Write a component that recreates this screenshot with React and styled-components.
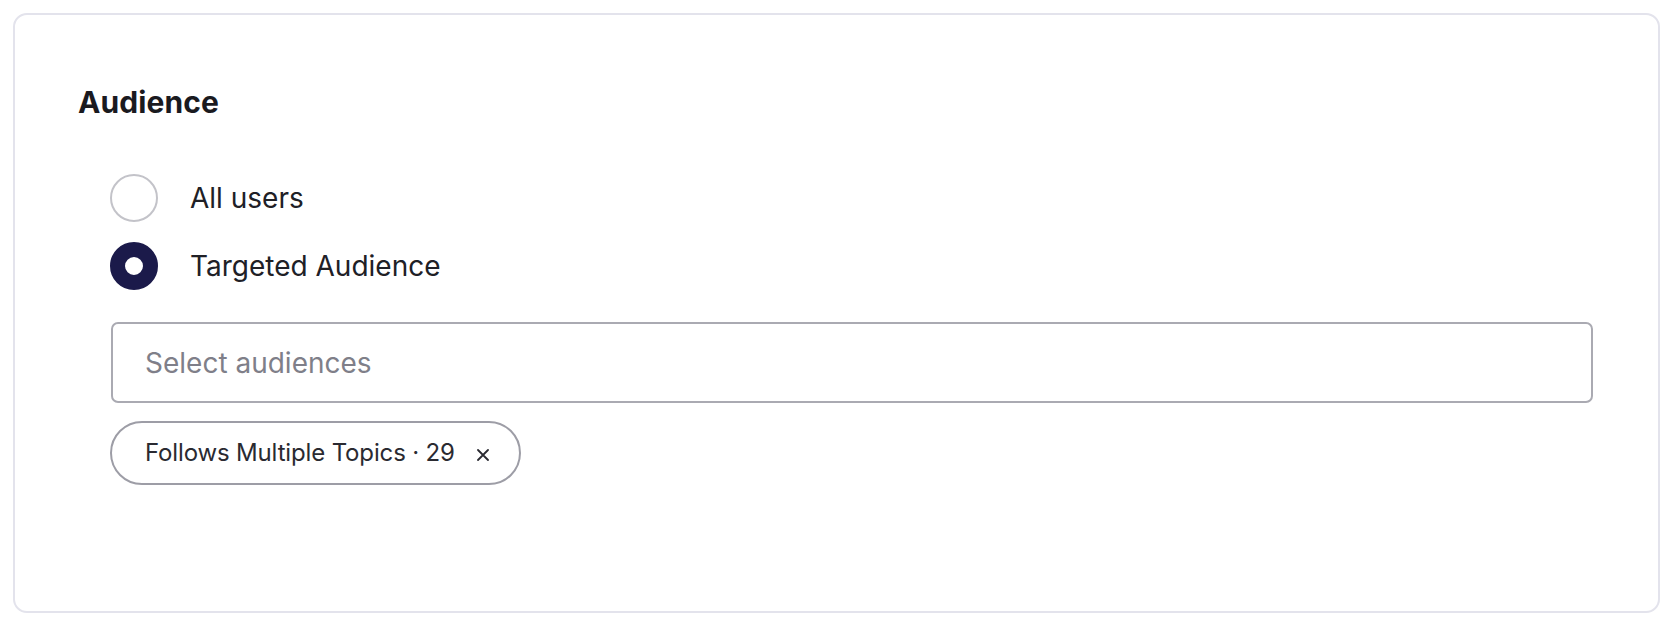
import React from 'react';
import styled, { createGlobalStyle } from 'styled-components';

const Global = createGlobalStyle`
  html, body {
    margin: 0;
    padding: 0;
    background: #fff;
  }
  body {
    font-family: Inter, "Noto Sans", "Liberation Sans", sans-serif;
    -webkit-font-smoothing: antialiased;
  }
`;

const Page = styled.div`
  padding: 13px 14px 12px 13px;
`;

const Card = styled.section`
  border: 2px solid #e3e3ec;
  border-radius: 14px;
  background: #fff;
  padding: 69px 65px 126px 63px;
`;

const Heading = styled.h2`
  margin: 0;
  font-size: 30px;
  line-height: 36px;
  font-weight: 700;
  color: #1a1a1f;
  letter-spacing: 0.1px;
`;

const Body = styled.div`
  margin: 54px 0 0 32px;
  display: flex;
  flex-direction: column;
`;

const Options = styled.div`
  display: flex;
  flex-direction: column;
  gap: 20px;
`;

const Option = styled.label`
  display: flex;
  align-items: center;
  gap: 32px;
  height: 48px;
  font-size: 28px;
  line-height: 48px;
  color: #202026;
  cursor: pointer;
`;

const Radio = styled.span`
  box-sizing: border-box;
  width: 48px;
  height: 48px;
  border-radius: 50%;
  flex-shrink: 0;
  border: ${p => (p.checked ? '15px solid #1b1a4a' : '2px solid #c3c3c9')};
  background: #fff;
`;

const Select = styled.div`
  box-sizing: border-box;
  margin: 32px 0 0 1px;
  height: 81px;
  border: 2px solid #aaaab2;
  border-radius: 7px;
  display: flex;
  align-items: center;
  padding: 0 32px;
  font-size: 28px;
  line-height: 36px;
  color: #7f7f89;
`;

const Chips = styled.div`
  display: flex;
  flex-wrap: wrap;
  gap: 12px;
  margin-top: 18px;
`;

const Chip = styled.span`
  box-sizing: border-box;
  height: 64px;
  display: inline-flex;
  align-items: center;
  padding: 0 30px 0 33px;
  border: 2px solid #9d9da6;
  border-radius: 32px;
  font-size: 24px;
  line-height: 30px;
  letter-spacing: -0.15px;
  color: #2a2a31;
`;

const Remove = styled.span`
  display: inline-flex;
  margin-left: 22px;
  margin-top: 3px;
`;

const options = [
  { label: 'All users', checked: false },
  { label: 'Targeted Audience', checked: true },
];

export default function App() {
  return (
    <Page>
      <Global />
      <Card>
        <Heading>Audience</Heading>
        <Body>
          <Options>
            {options.map(o => (
              <Option key={o.label}>
                <Radio checked={o.checked} />
                {o.label}
              </Option>
            ))}
          </Options>
          <Select>Select audiences</Select>
          <Chips>
            <Chip>
              Follows Multiple Topics · 29
              <Remove>
                <svg width="12" height="12" viewBox="0 0 12 12">
                  <path d="M1 1L11 11M11 1L1 11" stroke="#2a2a31" strokeWidth="1.8" strokeLinecap="round" />
                </svg>
              </Remove>
            </Chip>
          </Chips>
        </Body>
      </Card>
    </Page>
  );
}
